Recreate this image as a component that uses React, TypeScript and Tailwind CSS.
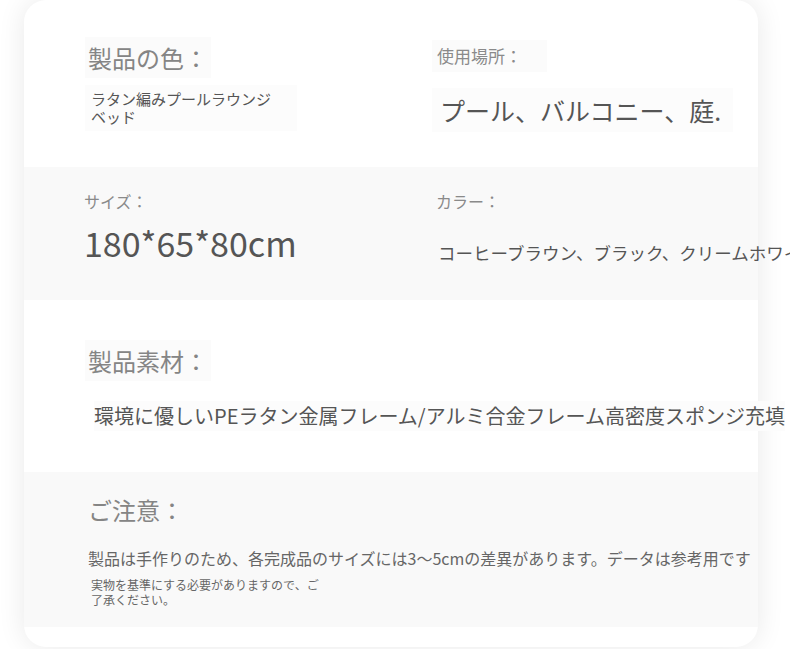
const font = { fontFamily: '"Noto Sans CJK JP", "Noto Sans", sans-serif' };

function App() {
  return (
    <div className="min-h-screen w-full bg-white overflow-hidden" style={font}>
      <div className="ml-[24px] w-[734px] h-[647px] bg-white rounded-[22px] shadow-[0_0_28px_rgba(0,0,0,0.09)] flex flex-col">
        {/* 色 / 使用場所 */}
        <div className="h-[167px] flex shrink-0">
          <div className="w-[408px] shrink-0 pl-[61px] pt-[37px]">
            <div className="inline-block bg-[#fbfbfb] px-[3px] text-[24px] leading-[41px] text-[#858585]">製品の色：</div>
            <div className="mt-[7px] w-[212px] bg-[#fcfcfc] px-[6px] py-[5px]">
              <p className="w-[190px] text-[15px] leading-[18px] text-[#555]">ラタン編みプールラウンジベッド</p>
            </div>
          </div>
          <div className="pt-[40px]">
            <div className="inline-block bg-[#fbfbfb] pl-[5px] pr-[25px] text-[17px] leading-[32px] text-[#8a8a8a]">使用場所：</div>
            <div className="mt-[16px] bg-[#fcfcfc] pl-[8px] pr-[12px] text-[25px] leading-[44px] text-[#555] whitespace-nowrap">プール、バルコニー、庭.</div>
          </div>
        </div>

        {/* サイズ / カラー */}
        <div className="h-[133px] flex shrink-0 bg-[#f9f9f9]">
          <div className="w-[408px] shrink-0 pl-[60px] pt-[20px]">
            <div className="text-[16px] leading-[28px] text-[#8a8a8a]">サイズ：</div>
            <div className="mt-[6px] text-[34px] leading-[44px] text-[#555]">180*65*80cm</div>
          </div>
          <div className="pt-[20px] pl-[4px]">
            <div className="text-[16px] leading-[28px] text-[#8a8a8a]">カラー：</div>
            <div className="mt-[26px] pl-[2px] text-[17.5px] leading-[24px] text-[#555] whitespace-nowrap">
              コーヒーブラウン、ブラック、クリームホワイト
            </div>
          </div>
        </div>

        {/* 素材 */}
        <div className="h-[172px] shrink-0 pl-[61px] pt-[40px]">
          <div className="inline-block bg-[#fbfbfb] px-[3px] text-[24px] leading-[41px] text-[#858585]">製品素材：</div>
          <div className="mt-[20px] ml-[9px] w-fit bg-[#fcfcfc] text-[20px] leading-[30px] text-[#555] whitespace-nowrap">
            環境に優しいPEラタン金属フレーム/アルミ合金フレーム高密度スポンジ充填
          </div>
        </div>

        {/* 注意 */}
        <div className="h-[155px] shrink-0 bg-[#f9f9f9] pl-[64px] pt-[17px]">
          <div className="text-[24px] leading-[41px] text-[#858585]">ご注意：</div>
          <p className="mt-[16px] text-[16px] leading-[24px] text-[#666] whitespace-nowrap">
            製品は手作りのため、各完成品のサイズには3〜5cmの差異があります。データは参考用です
          </p>
          <p className="mt-[7px] ml-[3px] w-[232px] text-[12px] leading-[15px] text-[#666]">
            実物を基準にする必要がありますので、ご了承ください。
          </p>
        </div>
      </div>
    </div>
  );
}

export default App;
